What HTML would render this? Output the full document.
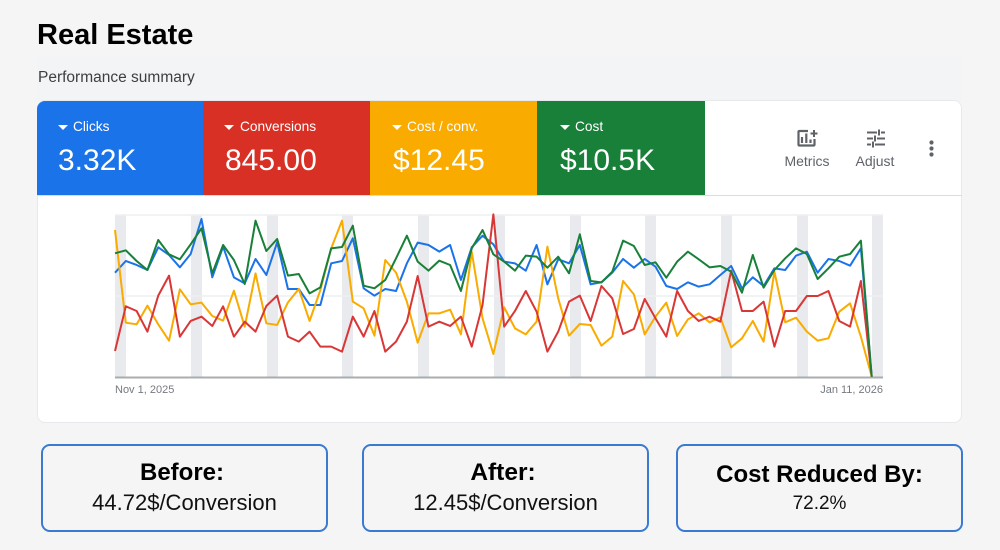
<!DOCTYPE html>
<html><head><meta charset="utf-8"><style>
html,body{margin:0;padding:0;width:1000px;height:550px;overflow:hidden;background:#f5f5f6;font-family:"Liberation Sans",sans-serif}
.a{position:absolute;white-space:nowrap}
.tile{position:absolute;top:101px;height:94px;color:#fff}
.tl{position:absolute;top:18px;font-size:13.7px;line-height:16px;white-space:nowrap}
.tv{position:absolute;top:41px;font-size:30px;line-height:38px;white-space:nowrap}
.tri{position:absolute;top:24px;left:21px;width:0;height:0;border-left:5px solid transparent;border-right:5px solid transparent;border-top:5px solid #fff}
.box{position:absolute;top:444px;height:84px;border:2px solid #3a7bd1;border-radius:9px;text-align:center;color:#000}
.h{position:absolute;left:0;right:0;font-weight:bold;font-size:24px;line-height:28px;white-space:nowrap}
.s{position:absolute;left:0;right:0;font-size:22px;line-height:26px;white-space:nowrap;color:#111}
</style></head><body>
<div class="a" style="left:37px;top:55px;width:925px;height:46px;background:#f3f4f6"></div>
<div class="a" style="left:37px;top:18px;font-size:29px;line-height:34px;font-weight:bold;color:#000">Real Estate</div>
<div class="a" style="left:38px;top:69px;font-size:15.5px;line-height:17px;color:#3c4043">Performance summary</div>

<div class="a" style="left:37px;top:100px;width:923px;height:321px;background:#fff;border:1px solid #e8e9ec;border-radius:8px"></div>
<div class="a" style="left:37px;top:195px;width:925px;height:1px;background:#dadce0"></div>

<div class="tile" style="left:37px;width:166px;background:#1a73e8;border-top-left-radius:8px"><div class="tri"></div><div class="tl" style="left:36px">Clicks</div><div class="tv" style="left:21px">3.32K</div></div>
<div class="tile" style="left:203px;width:167px;background:#d93025"><div class="tri"></div><div class="tl" style="left:37px">Conversions</div><div class="tv" style="left:22px">845.00</div></div>
<div class="tile" style="left:370px;width:167px;background:#f9ab00"><div class="tri" style="left:22px"></div><div class="tl" style="left:37px">Cost / conv.</div><div class="tv" style="left:23px">$12.45</div></div>
<div class="tile" style="left:537px;width:168px;background:#188038"><div class="tri" style="left:23px"></div><div class="tl" style="left:38px">Cost</div><div class="tv" style="left:23px">$10.5K</div></div>

<svg class="a" style="left:0;top:0" width="1000" height="550" viewBox="0 0 1000 550">
<g fill="none" stroke="#5f6368">
<path d="M808 131H799.500Q798.500 131 798.500 132V144.500Q798.500 145.500 799.500 145.500H813.500Q814.500 145.500 814.500 144.500V139" stroke-width="2.200"/>
<path d="M802 143V137M806.300 143V133.500M810.500 143V139.500" stroke-width="2.200"/>
<path d="M814 130V137M810.500 133.500H817.500" stroke-width="2"/>
<path d="M867 132.500H877M881 132.500H885M867 138.500H873M877 138.500H885M867 144.500H871M875 144.500H885" stroke-width="2"/>
<path d="M879 129.500V135.500M875 135.500V141.500M873 141.500V147.500" stroke-width="2"/>
</g>
<g fill="#5f6368"><circle cx="931.500" cy="142.500" r="2.100"/><circle cx="931.500" cy="148.500" r="2.100"/><circle cx="931.500" cy="154.500" r="2.100"/></g>
<text x="807" y="166" font-family="Liberation Sans" font-size="14" fill="#5f6368" text-anchor="middle">Metrics</text>
<text x="875" y="166" font-family="Liberation Sans" font-size="14" fill="#5f6368" text-anchor="middle">Adjust</text>

<g fill="#e8eaed">
<rect x="115" y="215" width="11" height="162"/><rect x="191" y="215" width="11" height="162"/><rect x="267" y="215" width="11" height="162"/><rect x="342" y="215" width="11" height="162"/><rect x="418" y="215" width="11" height="162"/><rect x="494" y="215" width="11" height="162"/><rect x="570" y="215" width="11" height="162"/><rect x="645" y="215" width="11" height="162"/><rect x="721" y="215" width="11" height="162"/><rect x="797" y="215" width="11" height="162"/><rect x="872" y="215" width="11" height="162"/>
</g>
<path d="M115 215H883M115 296H883" stroke="#eeeff1" stroke-width="1.500"/>
<path d="M115 377.500H883" stroke="#a9acb0" stroke-width="2"/>
<text x="115" y="393" font-family="Liberation Sans" font-size="11" fill="#757a80">Nov 1, 2025</text>
<text x="883" y="393" font-family="Liberation Sans" font-size="11" fill="#757a80" text-anchor="end">Jan 11, 2026</text>

<g transform="translate(115,205) scale(10.81,0.3333)" fill="none" stroke-width="2" stroke-linejoin="round">
<polyline vector-effect="non-scaling-stroke" stroke="#1a73e8" points="0,203 1,168 2,180 3,195 4,127 5,150 6,187 7,147 8,42 9,217 10,125 11,217 12,235 13,162 14,210 15,112 16,252 17,252 18,300 19,300 20,175 21,168 22,100 23,250 24,272 25,252 26,258 27,175 28,113 29,120 30,140 31,120 32,225 33,127 34,92 35,118 36,170 37,175 38,197 39,120 40,238 41,163 42,175 43,120 44,238 45,232 46,203 47,162 48,188 49,162 50,185 51,243 52,252 53,232 54,245 55,238 56,210 57,183 58,250 59,217 60,243 61,190 62,195 63,152 64,140 65,203 66,162 67,168 68,182 69,130 70,515"/>
<polyline vector-effect="non-scaling-stroke" stroke="#f9ab00" points="0,75 1,353 2,358 3,302 4,358 5,407 6,253 7,298 8,293 9,333 10,347 11,257 12,365 13,205 14,355 15,360 16,292 17,252 18,348 19,255 20,130 21,47 22,290 23,310 24,392 25,165 26,203 27,290 28,413 29,325 30,325 31,314 32,388 33,140 34,340 35,447 36,307 37,370 38,388 39,350 40,125 41,280 42,392 43,357 44,360 45,422 46,395 47,228 48,268 49,388 50,335 51,293 52,393 53,343 54,325 55,352 56,337 57,427 58,400 59,348 60,410 61,200 62,352 63,338 64,380 65,407 66,400 67,320 68,295 69,395 70,515"/>
<polyline vector-effect="non-scaling-stroke" stroke="#d93636" points="0,438 1,304 2,318 3,380 4,272 5,212 6,395 7,348 8,335 9,363 10,304 11,395 12,350 13,380 14,303 15,272 16,395 17,410 18,380 19,425 20,425 21,440 22,335 23,395 24,318 25,440 26,410 27,350 28,213 29,365 30,350 31,363 32,335 33,425 34,300 35,28 36,365 37,318 38,258 39,320 40,440 41,380 42,290 43,272 44,348 45,243 46,280 47,387 48,372 49,282 50,340 51,395 52,258 53,318 54,348 55,335 56,350 57,197 58,318 59,318 60,290 61,425 62,318 63,318 64,273 65,273 66,258 67,348 68,365 69,228 70,515"/>
<polyline vector-effect="non-scaling-stroke" stroke="#188038" points="0,145 1,136 2,168 3,195 4,105 5,148 6,163 7,118 8,70 9,205 10,120 11,165 12,237 13,47 14,138 15,102 16,212 17,207 18,265 19,247 20,130 21,126 22,62 23,242 24,250 25,225 26,160 27,92 28,170 29,197 30,167 31,180 32,258 33,130 34,75 35,148 36,170 37,197 38,152 39,155 40,188 41,155 42,205 43,88 44,228 45,232 46,200 47,107 48,123 49,180 50,172 51,218 52,170 53,140 54,163 55,187 56,183 57,200 58,263 59,150 60,248 61,195 62,160 63,130 64,147 65,222 66,190 67,155 68,147 69,107 70,515"/>
</g>
</svg>

<div class="box" style="left:41px;width:283px"><div class="h" style="top:13px;left:-5px">Before:</div><div class="s" style="top:44px">44.72$/Conversion</div></div>
<div class="box" style="left:362px;width:283px"><div class="h" style="top:13px;left:-5px;font-size:24.500px">After:</div><div class="s" style="top:44px">12.45$/Conversion</div></div>
<div class="box" style="left:676px;width:283px"><div class="h" style="top:15px">Cost Reduced By:</div><div class="s" style="top:45px;font-size:19px">72.2%</div></div>
</body></html>
